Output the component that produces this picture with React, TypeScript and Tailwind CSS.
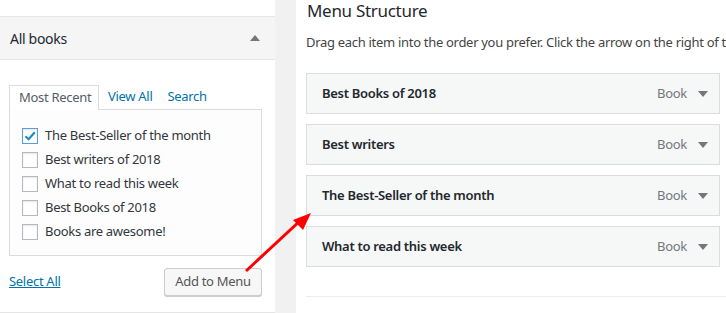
import React from 'react';

const font = { fontFamily: '"Noto Sans", "Open Sans", sans-serif', letterSpacing: '-0.3px' };

const recent = [
  { label: 'The Best-Seller of the month', checked: true },
  { label: 'Best writers of 2018', checked: false },
  { label: 'What to read this week', checked: false },
  { label: 'Best Books of 2018', checked: false },
  { label: 'Books are awesome!', checked: false },
];

const menuItems = ['Best Books of 2018', 'Best writers', 'The Best-Seller of the month', 'What to read this week'];

const Checkbox: React.FC<{ checked: boolean }> = ({ checked }) => (
  <span
    className={
      'w-[16px] h-[16px] shrink-0 flex items-center justify-center bg-white border shadow-[inset_0_1px_2px_rgba(0,0,0,0.1)] ' +
      (checked ? 'border-[#5b9dd9] shadow-[0_0_2px_rgba(30,140,190,0.8)]' : 'border-[#b4b9be]')
    }
  >
    {checked && (
      <svg width="14" height="14" viewBox="0 0 14 14">
        <path d="M2.5 7.2 L5.6 10.2 L11.8 3.2" fill="none" stroke="#1e8cbe" strokeWidth="2.2" />
      </svg>
    )}
  </span>
);

const Caret: React.FC<{ up?: boolean; color?: string }> = ({ up, color = '#72777c' }) => (
  <svg width="10" height="6" viewBox="0 0 10 6">
    <path d={up ? 'M5 0 L10 6 L0 6 Z' : 'M0 0 L10 0 L5 6 Z'} fill={color} />
  </svg>
);

export default function App() {
  return (
    <div className="relative w-[726px] h-[313px] overflow-hidden bg-[#f1f1f1] flex" style={font}>
      {/* left: All books box */}
      <div className="w-[275px] shrink-0 bg-white border-b border-[#e5e5e5] h-[313px] flex flex-col">
        <div className="h-[17px] border-b border-[#e5e5e5]" />
        <div className="h-[43px] bg-[#f5f5f5] border-b border-[#e5e5e5] flex items-center justify-between pl-[10px] pr-[15px]">
          <span className="text-[14px] text-[#23282d]">All books</span>
          <Caret up color="#72777c" />
        </div>
        <div className="pl-[9px] pr-[13px] pt-[24px]">
          <div className="flex items-end text-[13px] h-[25px]">
            <div className="h-[25px] w-[90px] border border-b-0 border-[#dcdcde] bg-white pl-[9px] flex items-center text-[#555d66] relative z-10 -mb-px">
              Most Recent
            </div>
            <span className="ml-[9px] text-[#0073aa] leading-[25px]">View All</span>
            <span className="ml-[15px] text-[#0073aa] leading-[25px]">Search</span>
          </div>
          <div className="border border-[#dcdcde] bg-[#fdfdfd] pl-[12px] pt-[14px] pb-[11px] h-[147px]">
            {recent.map((r) => (
              <div key={r.label} className="h-[24px] flex items-center gap-[7px] text-[13px] text-[#32373c]">
                <Checkbox checked={r.checked} />
                <span>{r.label}</span>
              </div>
            ))}
          </div>
          <div className="flex items-center justify-between mt-[12px]">
            <span className="text-[13px] text-[#0073aa] underline">Select All</span>
            <button className="h-[28px] w-[98px] text-[13px] text-[#555] bg-[#f7f7f7] border border-[#cccccc] rounded-[3px] shadow-[0_1px_0_#ccc]">
              Add to Menu
            </button>
          </div>
        </div>
      </div>

      {/* right: Menu Structure */}
      <div className="ml-[21px] flex-1 min-w-0 bg-white pl-[10px] overflow-hidden">
        <h3 className="text-[17px] text-[#23282d] leading-[22px] pl-[1px] whitespace-nowrap">Menu Structure</h3>
        <p className="text-[13px] text-[#444] mt-[11px] leading-[18px] whitespace-nowrap">
          Drag each item into the order you prefer. Click the arrow on the right of the item to reveal additional configuration options.
        </p>
        <div className="mt-[22px] w-[414px] flex flex-col gap-[10px]">
          {menuItems.map((m) => (
            <div key={m} className="h-[41px] bg-[#f6f7f7] border border-[#dcdcde] flex items-center pl-[15px] pr-[11px]">
              <span className="text-[13px] font-semibold text-[#23282d] flex-1">{m}</span>
              <span className="text-[13px] text-[#72777c] mr-[11px]">Book</span>
              <Caret />
            </div>
          ))}
        </div>
        <div className="mt-[29px] border-t border-[#eeeeee]" />
      </div>

      {/* red annotation arrow */}
      <svg className="absolute inset-0 pointer-events-none" width="726" height="313">
        <line x1="246" y1="271" x2="302" y2="219" stroke="#ff0000" strokeWidth="3" />
        <polygon points="293,220 311,213 303,230" fill="#ff0000" />
      </svg>
    </div>
  );
}
